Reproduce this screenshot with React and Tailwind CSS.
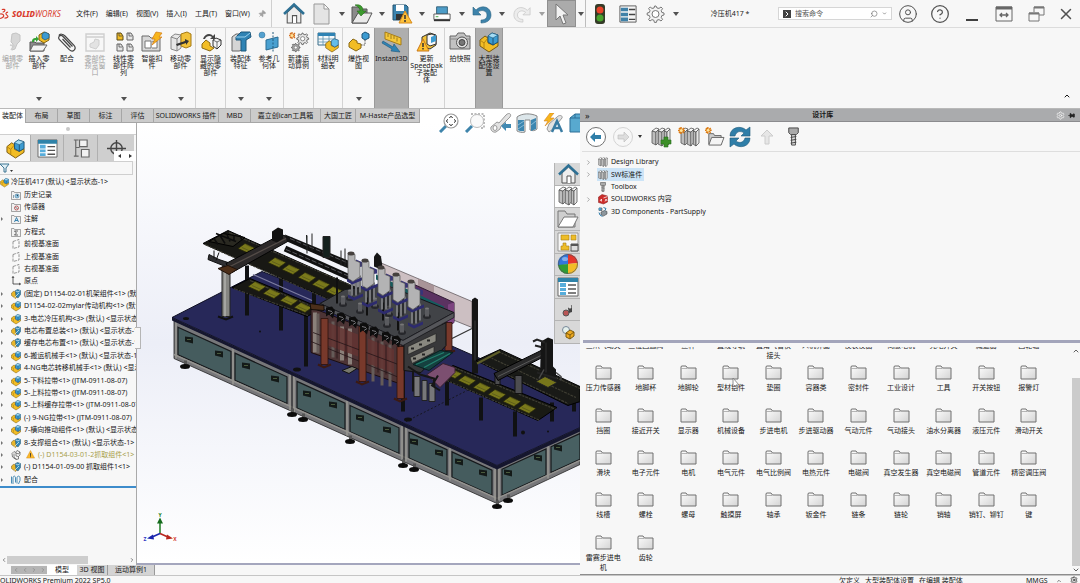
import { ChevronUp, ChevronDown, ChevronRight, ChevronLeft, CircleHelp, CircleUser, Search, Settings, X, Pin } from 'lucide-react'

const menus = ['文件(F)', '编辑(E)', '视图(V)', '插入(I)', '工具(T)', '窗口(W)']

const ribbon = [
  { label: '编辑零部件', lines: ['编辑零', '部件'], icon: 'clipGray', width: 'w-[25px]', disabled: true },
  { label: '插入零部件', lines: ['插入零', '部件'], icon: 'insert', width: 'w-[28px]', menu: true },
  { label: '配合', lines: ['配合'], icon: 'clip', width: 'w-[28px]' },
  { label: '零部件预览窗口', lines: ['零部件', '预览窗', '口'], icon: 'preview', width: 'w-[28px]', disabled: true },
  { label: '线性零部件阵列', lines: ['线性零', '部件阵', '列'], icon: 'pattern', width: 'w-[29px]', menu: true },
  { label: '智能扣件', lines: ['智能扣', '件'], icon: 'fastener', width: 'w-[28px]' },
  { label: '移动零部件', lines: ['移动零', '部件'], icon: 'move', width: 'w-[30px]', menu: true, divider: true },
  { label: '显示隐藏的零部件', lines: ['显示隐', '藏的零', '部件'], icon: 'showHide', width: 'w-[30px]', divider: true },
  { label: '装配体特征', lines: ['装配体', '特征'], icon: 'feature', width: 'w-[29px]', menu: true },
  { label: '参考几何体', lines: ['参考几', '何体'], icon: 'reference', width: 'w-[29px]', menu: true, divider: true },
  { label: '新建运动算例', lines: ['新建运', '动算例'], icon: 'gears', width: 'w-[30px]', divider: true },
  { label: '材料明细表', lines: ['材料明', '细表'], icon: 'bom', width: 'w-[29px]', divider: true },
  { label: '爆炸视图', lines: ['爆炸视', '图'], icon: 'explode', width: 'w-[31px]', menu: true },
  { label: 'Instant3D', lines: ['Instant3D'], icon: 'instant', width: 'w-[35px]', active: true },
  { label: '更新Speedpak子装配体', lines: ['更新', 'Speedpak', '子装配', '体'], icon: 'speedpak', width: 'w-[36px]', divider: true },
  { label: '拍快照', lines: ['拍快照'], icon: 'camera', width: 'w-[30px]' },
  { label: '大型装配体设置', lines: ['大型装', '配体设', '置'], icon: 'asm', width: 'w-[28px]', active: true },
]

const commandTabs = [
  { label: '装配体', width: 'w-[26px]', active: true },
  { label: '布局', width: 'w-[32px]' },
  { label: '草图', width: 'w-[32px]' },
  { label: '标注', width: 'w-[32px]' },
  { label: '评估', width: 'w-[32px]' },
  { label: 'SOLIDWORKS 插件', width: 'w-[65px]' },
  { label: 'MBD', width: 'w-[32px]' },
  { label: '嘉立创ican工具箱', width: 'w-[70px]' },
  { label: '大国工匠', width: 'w-[35px]' },
  { label: 'M-Haste产品选型', width: 'w-[64px]' },
]

const treeItems = [
  { label: '历史记录', icon: 'history' },
  { label: '传感器', icon: 'sensor' },
  { label: '注解', icon: 'note', open: true },
  { label: '方程式', icon: 'equation' },
  { label: '前视基准面', icon: 'plane' },
  { label: '上视基准面', icon: 'plane' },
  { label: '右视基准面', icon: 'plane' },
  { label: '原点', icon: 'origin' },
  { label: '(固定) D1154-02-01机架组件<1> (默认)', icon: 'part', open: true },
  { label: 'D1154-02-02mylar传动机构<1> (默认)', icon: 'asm', open: true },
  { label: '3-电芯冷压机构<3> (默认) <显示状态-1>', icon: 'asm', open: true },
  { label: '电芯布置总装<1> (默认) <显示状态-1>', icon: 'part', open: true },
  { label: '缓存电芯布置<1> (默认) <显示状态-1>', icon: 'part', open: true },
  { label: '6-搬运机械手<1> (默认) <显示状态-1>', icon: 'asm', open: true },
  { label: '4-NG电芯转移机械手<1> (默认) <显示状态-1>', icon: 'asm', open: true },
  { label: '5-下料拉带<1> (JTM-0911-08-07)', icon: 'asm', open: true },
  { label: '5-上料拉带<1> (JTM-0911-08-07)', icon: 'asm', open: true },
  { label: '5-上料缓存拉带<1> (JTM-0911-08-07)', icon: 'asm', open: true },
  { label: '(-) 9-NG拉带<1> (JTM-0911-08-07)', icon: 'asm', open: true },
  { label: '7-横向推动组件<1> (默认) <显示状态-1>', icon: 'asm', open: true },
  { label: '8-支撑组合<1> (默认) <显示状态-1>', icon: 'part', open: true },
  { label: '(-) D1154-03-01-2抓取组件<1>', icon: 'hidden', open: true, warning: true },
  { label: '(-) D1154-01-09-00 抓取组件1<1>', icon: 'part', open: true },
  { label: '配合', icon: 'mates', open: true },
]

const libraryItems = [
  { label: 'Design Library', icon: 'books', open: true },
  { label: 'SW标准件', icon: 'books', open: true, selected: true },
  { label: 'Toolbox', icon: 'screw' },
  { label: 'SOLIDWORKS 内容', icon: 'content', open: true },
  { label: '3D Components - PartSupply', icon: 'supply' },
]

const folders = [
  '三爪气动夹', '三位四通阀', '丝杆', '直线导轨', '直角气管快接头', '人机界面', '仪表仪器', '伺服电机', '光电开关', '减速器', '凸轮轴',
  '压力传感器', '地脚杯', '地脚轮', '型材铝件', '垫圈', '容器类', '密封件', '工业设计', '工具', '开关按钮', '报警灯',
  '挡圈', '接近开关', '显示器', '机械设备', '步进电机', '步进驱动器', '气动元件', '气动接头', '油水分离器', '液压元件', '滑动开关',
  '滑块', '电子元件', '电机', '电气元件', '电气比例阀', '电热元件', '电磁阀', '真空发生器', '真空电磁阀', '管道元件', '精密调压阀',
  '线槽', '螺栓', '螺母', '触摸屏', '轴承', '钣金件', '链条', '链轮', '销轴', '销钉、铆钉', '键',
  '雷赛步进电机', '齿轮',
]

const cog = 'M10 3l1 2 2 .4 2-1.4 1.6 1.6L15.200 7.600l.6 1.800 2.200.6v2l-2.200.6-.6 1.800 1.400 2L15 18l-2-1.400-2 .6-.6 2.200h-2L7.800 17.200 6 16.600 4 18l-1.400-1.400L4 14.400l-.6-1.800L1.200 12v-2l2.200-.6L4 7.600 2.600 5.600 4.200 4 6 5.400 8 5l.6-2z'

const volumes = (
  <g stroke="#555" strokeWidth=".8" strokeLinejoin="round">
    <path d="M1 4l4 1v13l-4-2zM7 4l4 1v14l-4-2zM13 4l3 1v14l-3-2z" fill="#bdbdbd" />
    <path d="M1 4l4-3 3 1-3 3zM7 4l4-3 3 1-3 3zM13 4l4-3 2 1-3 3z" fill="#f4f4f4" />
    <path d="M5 5l2-2v13l-2 2zM11 5l2-2v13l-2 3zM16 5l3-3v14l-3 3z" fill="#e6e6e6" />
  </g>
)

const art = {
  asm: (
    <>
      <path d="M1 8l5-4 3 2v5l5 2 5-3v4l-9 6-9-6z" fill="#f2bd25" stroke="#7a5a10" />
      <path d="M1 8l4 3v5M5 11l4-5" fill="none" stroke="#b58612" />
      <path d="M9 4l4-3 6 2v7l-5 3-5-3z" fill="#3c9bd1" stroke="#1c5578" />
      <path d="M9 4l5 2 5-3-6-2z" fill="#a4dcf5" stroke="#1c5578" strokeWidth=".6" />
      <path d="M14 6v7" stroke="#1c5578" />
    </>
  ),
  part: (
    <>
      <path d="M1 8l5-4 4 3v4l4 2-5 6-8-6z" fill="#e9b62a" stroke="#6f5a22" />
      <path d="M9 3l4-2 6 2v8l-5 7-4-3z" fill="#3287b5" stroke="#1d4d69" />
      <path d="M10 4l4 2 4-3M7 17l9-9" fill="none" stroke="#d9edf5" strokeWidth="1.500" />
    </>
  ),
  hidden: (
    <path d="M2 7l4-4 3 2 3-4 6 3v6l-3 3v5l-5 1-7-5zM6 7v8l5 3M10 5v7l5 1M10 6l5 2 3-4" fill="none" stroke="#444" strokeWidth="1.300" />
  ),
  clipGray: (
    <>
      <path d="M9 2l4-1 4 2v6l-3 3-2 5-3 1 1-6-2-2z" fill="#d7d7d7" stroke="#c4c4c4" />
      <path d="M7 13l4 1-3 4" fill="none" stroke="#cfcfcf" strokeWidth="1.500" />
    </>
  ),
  clip: (
    <path d="M15.500 14.500L6 4.500C3.500 2 0 5 2.500 7.700l10 10.200c3.500 3 7.500-1 4.500-4.500L8 4C6 2 3 1.500 1.800 3.500M13.500 15.500L5.500 7" fill="none" stroke="#444" strokeWidth="1.200" />
  ),
  insert: (
    <>
      <path d="M1 10h5l1 1h8v8H1z" fill="#8d8d8d" stroke="#555" />
      <path d="M4 13h14l-4 6H1z" fill="#f4f4f4" stroke="#666" />
      <path d="M3 10c0-3 1-4 4-4V4l3 3-3 3V8C5 8 5 9 5 10z" fill="#36a336" />
      <path d="M10 3l5-3 5 2v6l-5 3-5-3z" fill="#f2bd25" stroke="#826311" />
      <path d="M13 2l3-2 4 2v4l-4 2-3-2z" fill="#3c9bd1" stroke="#1c5578" strokeWidth=".7" />
    </>
  ),
  preview: (
    <g fill="none" stroke="#cfcfcf">
      <path d="M1 2h18v17H1zM1 5h18" strokeWidth="1.400" />
      <path d="M5 12l4-2 1-3 4 1v5l-3 4-6-2z" fill="#e3e3e3" />
    </g>
  ),
  pattern: (
    <>
      <path d="M3 1h4l2 3v4H3z" fill="#f2bd25" stroke="#5a4a1a" />
      <path d="M13 1h4l2 3v4h-6zM3 12h4l2 3v4H3zM13 12h4l2 3v4h-6z" fill="#e6e6e6" stroke="#666" />
      <path d="M5 1v3h3M15 1v3h3M5 12v3h3M15 12v3h3" fill="none" stroke="#444" strokeWidth=".7" />
    </>
  ),
  fastener: (
    <>
      <path d="M0 4h7l2 2h9v13H0z" fill="#d8d8d8" stroke="#6b6b6b" />
      <path d="M3 9h6v7H3zM10 10l5-1v7h-5" fill="#fff" stroke="#777" />
      <path d="M14 0l6 1-3 4h3L10 13l3-6h-3z" fill="#f7b51c" stroke="#d37a12" strokeWidth=".7" />
    </>
  ),
  move: (
    <>
      <path d="M0 5l4-3 6 1v13l-4 3-6-2z" fill="#e6e6e6" stroke="#888" />
      <path d="M0 5l6 2 4-4M6 7v12" fill="none" stroke="#888" />
      <path d="M10 2l6-2 4 2v12l-5 2-5-2z" fill="#f2c23a" stroke="#a67b14" />
      <path d="M5 12l9-3V7l4 2-3 4v-2l-9 3z" fill="#333" />
    </>
  ),
  showHide: (
    <>
      <path d="M2 7c2-6 8-6 10-3l2-2v5H9l2-2C9 3 5 4 4 7z" fill="#444" />
      <path d="M1 12l4-4 4 3v3l4 2-4 3-8-3z" fill="#f2bd25" stroke="#8a6915" />
      <path d="M12 8l3-2 5 2v5l-4 4-4-3z" fill="#f4f4f4" stroke="#333" />
      <path d="M12 8l4 2 4-2M16 10v6" fill="none" stroke="#333" strokeWidth=".7" />
    </>
  ),
  feature: (
    <>
      <path d="M1 5l4-3h7v16l-4 1H1z" fill="#d5d5d5" stroke="#666" />
      <path d="M5 5l5-5h9l1 5-5 3v11h-5V8H5z" fill="#2f83b4" stroke="#1d587c" />
      <path d="M5 5h9l5-4" fill="none" stroke="#9ad1ee" />
    </>
  ),
  reference: (
    <>
      <circle cx="3" cy="3" r="3" fill="#54a1cf" stroke="#2d6f97" strokeWidth=".5" />
      <path d="M7 8l12-3v10L7 18z" fill="#4aa0d0" stroke="#2a6c93" />
      <path d="M14 0v20" stroke="#225a7c" strokeDasharray="2 1.500" />
    </>
  ),
  gears: (
    <>
      <g transform="translate(7 -1) scale(.7)"><path d={cog} fill="#e4e4e4" stroke="#666" strokeWidth="1.300" /><circle cx="9.500" cy="11" r="3" fill="#fff" stroke="#666" /></g>
      <g transform="translate(2 10) scale(.5)"><path d={cog} fill="#aaa" stroke="#555" strokeWidth="1.500" /><circle cx="9.500" cy="11" r="3" fill="#fff" stroke="#555" /></g>
      <path d="M3 0v7M0 3.500h6M1 1l5 5M6 1L1 6" stroke="#d6701d" strokeWidth="1.300" />
      <circle cx="3" cy="3.500" r="1.500" fill="#ffe59b" />
    </>
  ),
  bom: (
    <>
      <path d="M0 1h17v12H0z" fill="#f5f9fb" stroke="#3b6d88" />
      <path d="M0 1h17v3H0z" fill="#2f83b4" />
      <path d="M0 7h17M0 10h17M5 4v9M11 4v9" stroke="#5d93ad" strokeWidth=".8" />
      <g transform="translate(7 6) scale(.7)"><path d="M1 8l5-4 3 2v5l5 2 5-3v4l-9 6-9-6z" fill="#f2bd25" stroke="#7a5a10" /><path d="M9 4l4-3 6 2v7l-5 3-5-3z" fill="#65bce8" stroke="#1c5578" /></g>
    </>
  ),
  explode: (
    <>
      <path d="M13 2l3-2 4 2v4l-4 2-3-2z" fill="#3c9bd1" stroke="#1c5578" />
      <path d="M16 8v5h-5" fill="none" stroke="#555" strokeDasharray="1.500 1" />
      <path d="M0 11l4-4 4 2v2l4 1v4l-5 3-7-4z" fill="#f2bd25" stroke="#8a6915" />
    </>
  ),
  instant: (
    <>
      <path d="M3 0l16 6v7L3 7z" fill="#f6c83a" stroke="#a57c18" />
      <path d="M6 2v3M9 3v4M12 4v3M15 5.500v4" stroke="#8a6915" strokeWidth=".8" />
      <path d="M1 9l10 6 1-3 6 8-9-1 1-2L0 11z" fill="#2f83b4" stroke="#1d587c" strokeWidth=".6" />
    </>
  ),
  speedpak: (
    <>
      <path d="M5 5l8-4 6 2v10l-6 4-8-3z" fill="#f2c43b" stroke="#333" />
      <path d="M10 3l5-1 4 2v8l-6 2-3-2z" fill="#f7f7f7" stroke="#333" />
      <path d="M14 5l5-2v6l-5 2z" fill="#3c9bd1" />
      <path d="M6 7l6 12H0z" fill="#ffc12d" stroke="#c9781a" />
      <path d="M6 11v4M6 16v1.500" stroke="#333" strokeWidth="1.500" />
    </>
  ),
  camera: (
    <>
      <path d="M0 4h6l2-3h6l2 3h4v13H0z" fill="#c2c2c2" stroke="#666" />
      <path d="M0 7h20" stroke="#888" />
      <circle cx="12" cy="10.500" r="5.500" fill="#e2e2e2" stroke="#555" />
      <circle cx="12" cy="10.500" r="3" fill="#777" stroke="#444" />
    </>
  ),
  home: (
    <>
      <path d="M4 9v10h13V9l-6.500-6z" fill="#eee" stroke="#555" />
      <path d="M9 19v-7h4v7" fill="#fff" stroke="#555" />
      <path d="M1 10.500L10.500 1.500 20 10.500" fill="none" stroke="#2e7094" strokeWidth="2.500" />
    </>
  ),
  doc: <path d="M2 0h10l5 5v15H2zM12 0v5h5" fill="#e4e4e4" stroke="#999" />,
  open: (
    <>
      <path d="M0 3h7l1 2h7v14H0z" fill="#8b8b8b" stroke="#555" />
      <path d="M6 9h14l-5 10H0z" fill="#eaeaea" stroke="#555" />
      <path d="M3 1c6-1 8 2 8 6h3l-5 5-4-5h3c0-2-1-4-5-6z" fill="#3c9a2d" stroke="#276b1c" strokeWidth=".6" />
    </>
  ),
  save: (
    <>
      <path d="M1 1h13l2 2v13H1z" fill="#3b83ae" stroke="#24536f" />
      <path d="M4 1h8v6H4z" fill="#fff" />
      <path d="M4 10h8v6H4z" fill="#333" />
      <path d="M13 7l7 12H7z" fill="#fdc13a" stroke="#d78b1d" />
      <path d="M13 11v4M13 16v2" stroke="#333" strokeWidth="1.500" />
    </>
  ),
  print: (
    <>
      <path d="M4 2h12v8H4z" fill="#4d9cc7" stroke="#2d5c76" />
      <path d="M1 10h18v6H1z" fill="#fff" stroke="#555" />
      <path d="M1 16h18v2H1z" fill="#333" />
      <path d="M3 13h3" stroke="#36a336" />
    </>
  ),
  undo: <path d="M1 3v8h8L6 8c4-3 9-1 9 3s-3 5-6 5v3c6 0 10-3 10-8C19 3 10 0 4 6z" fill="#3d83ab" stroke="#2d6483" strokeWidth=".6" />,
  redo: <path d="M19 3v8h-8l3-3c-4-3-9-1-9 3s3 5 6 5v3c-6 0-10-3-10-8C1 3 10 0 16 6z" fill="#ececec" stroke="#c6c6c6" strokeWidth=".8" />,
  cursor: <path d="M4 0v16l4-4 3 8 3-1-3-8h5z" fill="#f2f2f2" stroke="#777" />,
  traffic: (
    <>
      <rect x="5" y="0" width="10" height="20" rx="3" fill="#343b28" />
      <circle cx="10" cy="6" r="3.500" fill="#e8432a" />
      <circle cx="10" cy="14" r="3.500" fill="#49a32e" />
    </>
  ),
  list: (
    <>
      <path d="M1 1h18v18H1z" fill="#f4f4f4" stroke="#555" />
      <path d="M2 3h8v4H2zM2 8.500h8v4H2zM2 14h8v4H2z" fill="#3f81a8" />
      <path d="M11 5h7M11 10.500h7M11 16h7" stroke="#444" strokeWidth="1.500" />
    </>
  ),
  listBlue: (
    <>
      <path d="M0 1h20v18H0z" fill="#fff" stroke="#666" />
      <path d="M0 1h20v4H0z" fill="#2f83a9" />
      <path d="M2 6h6v4H2zM2 11h6v3H2zM2 15h6v3H2z" fill="#57addb" />
      <path d="M10 8h8M10 12h8M10 16h8" stroke="#555" strokeWidth="1.500" />
    </>
  ),
  config: (
    <path d="M3 1h5M5 1v17M3 18h5M5 9h4M9 1h8v7H9zM11 11h8v8h-8z" fill="#f2f2f2" stroke="#666" strokeWidth="1.200" />
  ),
  target: (
    <>
      <circle cx="10" cy="10" r="6" fill="none" stroke="#444" strokeWidth="1.500" />
      <path d="M0 10h20M10 1v18" stroke="#444" strokeWidth="1.500" />
    </>
  ),
  history: (
    <>
      <path d="M1 3h5l1 2h12v14H1z" fill="#f1f1f1" stroke="#555" />
      <circle cx="12" cy="12" r="4" fill="#9ccbe5" stroke="#2a6f98" />
      <path d="M12 9v3h2M5 10v6" stroke="#244f67" />
    </>
  ),
  sensor: (
    <>
      <path d="M1 3h5l1 2h12v14H1z" fill="#f1f1f1" stroke="#555" />
      <circle cx="11" cy="12" r="4" fill="none" stroke="#a33" strokeWidth="1.500" />
      <path d="M9 10l4 4" stroke="#444" strokeWidth="1.500" />
    </>
  ),
  note: (
    <>
      <path d="M1 3h5l1 2h12v14H1z" fill="#f1f1f1" stroke="#555" />
      <path d="M7 16l4-9 4 9M8 13h6" fill="none" stroke="#2878a8" strokeWidth="1.800" />
    </>
  ),
  equation: (
    <>
      <path d="M1 3h5l1 2h12v14H1z" fill="#f1f1f1" stroke="#555" />
      <path d="M14 8H7l4 4-4 4h7" fill="none" stroke="#333" strokeWidth="1.500" />
    </>
  ),
  plane: <path d="M4 5l12-4v15L4 19z" fill="#fafafa" stroke="#555" strokeWidth="1.200" strokeDasharray="6 2" />,
  origin: <path d="M4 1v15h15M2 4l2-3 2 3M16 14l3 2-3 2" fill="none" stroke="#333" strokeWidth="1.600" />,
  mates: <path d="M4 18V6c0-5 5-5 5 0v9M12 17V6c0-5 6-5 6 0v5l-3 7M1 3v14" fill="none" stroke="#4a8db5" strokeWidth="2" />,
  warning: (
    <>
      <path d="M10 1l9 17H1z" fill="#fdb92a" stroke="#d08a1b" />
      <path d="M10 7v6M10 14v2" stroke="#333" strokeWidth="2" />
    </>
  ),
  books: volumes,
  booksAdd: (
    <>
      {volumes}
      <path d="M13 10h4v3h3v4h-3v3h-4v-3h-3v-4h3z" fill="#3c8f28" stroke="#276b1c" strokeWidth=".6" />
    </>
  ),
  booksNew: (
    <>
      <g transform="translate(2 0)">{volumes}</g>
      <path d="M3 0v7M0 3.500h7M1 1l5 5M6 1L1 6" stroke="#dc7a12" strokeWidth="1.500" />
      <circle cx="3.300" cy="3.500" r="1.500" fill="#ffe59b" />
    </>
  ),
  folderNew: (
    <>
      <path d="M4 7h5l1 2h7v9H4z" fill="#ccc" stroke="#666" />
      <path d="M7 11h13l-3 8H4z" fill="#f4f4f4" stroke="#666" />
      <path d="M3 0v7M0 3.500h7M1 1l5 5M6 1L1 6" stroke="#dc7a12" strokeWidth="1.500" />
      <circle cx="3.300" cy="3.500" r="1.500" fill="#ffe59b" />
    </>
  ),
  refresh: (
    <>
      <path d="M0 9C0 0 11-2 16 3l4-3v9h-9l3-3C10 3 6 5 5 9z" fill="#2f7ea8" stroke="#205b7b" strokeWidth=".6" />
      <path d="M20 11c0 9-11 11-16 6l-4 3v-9h9l-3 3c4 3 8 1 9-3z" fill="#2f7ea8" stroke="#205b7b" strokeWidth=".6" />
    </>
  ),
  up: <path d="M10 3l6 6h-4v8H8V9H4z" fill="#e6e6e6" stroke="#ccc" />,
  screw: (
    <>
      <path d="M5 1h10v5l-2 2H7L5 6z" fill="#aaa" stroke="#444" />
      <path d="M8 8h4v11H8zM7 11l6-1M7 14l6-1M7 17l6-1" fill="#ddd" stroke="#444" />
    </>
  ),
  content: (
    <>
      <path d="M1 6l7-5 11 3v12l-8 4-10-3z" fill="#cc2d2b" stroke="#801b1b" />
      <path d="M11 8l8-3M4 14l3-4v5M14 15l2-5 2 4" fill="none" stroke="#fff" strokeWidth="1.500" />
    </>
  ),
  supply: (
    <>
      <path d="M2 2h6v5H2zM6 10l7-3 5 2v5l-7 4-5-3z" fill="#8d979d" stroke="#333" />
      <path d="M11 1l5 2-2 4M2 11l2 5 5 3" fill="none" stroke="#2878a8" strokeWidth="2" />
      <circle cx="4" cy="4" r="3" fill="#4c9bc9" />
    </>
  ),
  folderOpen: (
    <>
      <path d="M0 2h7l2 3h8v13H0z" fill="#cfcfcf" stroke="#777" />
      <path d="M6 8h14l-5 10H0z" fill="#fff" stroke="#777" />
    </>
  ),
  palette: (
    <>
      <path d="M0 1h20v18H0z" fill="#f6f6f6" stroke="#999" />
      <path d="M3 3h8v5H3zM13 3h5v5h-5zM5 11h3v3h3v4H3v-4h2z" fill="#eebd27" stroke="#a47d15" strokeWidth=".6" />
      <path d="M13 12h7v7h-7z" fill="#ddd" stroke="#555" /><path d="M13 12h7v2h-7z" fill="#555" />
    </>
  ),
  ball: (
    <>
      <path d="M10 10V0a10 10 0 0 1 10 9z" fill="#e5352c" />
      <path d="M10 10L10 0A10 10 0 0 0 0 12z" fill="#3177dd" />
      <path d="M10 10L0 11a10 10 0 0 0 10 9z" fill="#2f9c34" />
      <path d="M10 10l10-1a10 10 0 0 1-10 11z" fill="#f3bc26" />
      <circle cx="10" cy="10" r="9.500" fill="none" stroke="#555" strokeWidth=".7" />
      <ellipse cx="7" cy="5" rx="3" ry="2" fill="#fff" opacity=".4" />
    </>
  ),
  robot: (
    <>
      <circle cx="8" cy="13" r="3" fill="#b85454" stroke="#555" />
      <path d="M10 8l4-3v7l-3 1z" fill="#444" /><circle cx="12" cy="7" r="1.500" fill="#ddd" />
    </>
  ),
  cubes: (
    <>
      <circle cx="8" cy="8" r="3.500" fill="#e4f0ec" stroke="#789" />
      <path d="M8 11l4-3 4 2v4l-4 3-4-2z" fill="#eea91f" stroke="#7a5a10" /><path d="M8 11l4 2 4-3M12 13v4" fill="none" stroke="#7a5a10" />
    </>
  ),
  zoomFit: (
    <>
      <path d="M1 19l6-6" stroke="#3e84ab" strokeWidth="3" />
      <circle cx="12" cy="8" r="7" fill="#fff" stroke="#999" strokeWidth="1.200" />
      <path d="M12 3v2M12 11v2M7 8h2M15 8h2M10 5l2-2 2 2M10 11l2 2 2-2M9 6L7 8l2 2M15 6l2 2-2 2" fill="none" stroke="#666" />
    </>
  ),
  zoomArea: (
    <>
      <path d="M6 1h13v14h-4" fill="none" stroke="#777" strokeDasharray="2 1.500" />
      <path d="M1 19l6-6" stroke="#3e84ab" strokeWidth="3" />
      <circle cx="12" cy="8" r="6.500" fill="#fafafa" stroke="#bbb" />
    </>
  ),
  section: (
    <>
      <path d="M0 4c5-4 14-4 20-1v13c-2 2-5 2-7 1V7H8v12c-3 1-6 0-8-1z" fill="#dce6ea" stroke="#888" />
      <path d="M1 7h6v11c-3 0-5 0-6-1zM14 7l5-2v11l-5 2z" fill="#3c86b0" />
      <path d="M1 12l6-4M1 16l6-4M14 12l5-4" stroke="#a7d3ea" strokeWidth=".7" />
    </>
  ),
  prevView: (
    <>
      <path d="M0 14l6-5 2 1 7-8c3-3 6-1 4 2l-9 9-1 3-4 3c-3 1-6-2-5-5z" fill="#e2e2e2" stroke="#999" />
      <ellipse cx="4" cy="15" rx="2" ry="2.500" fill="#fff" stroke="#999" />
      <path d="M10 13l5-4v2h5v4h-5v3z" fill="#4189b2" />
    </>
  ),
  sketchView: (
    <>
      <path d="M4 16l2-5 8-7c3-3 6-1 5 1l-9 11-4 3z" fill="#e2e2e2" stroke="#999" />
      <path d="M7 0L1 8h4L2 13l9-8H7l4-5z" fill="#f7b51c" stroke="#d78521" strokeWidth=".6" />
      <path d="M9 19l5-11 5 11M11 15h6" fill="none" stroke="#3a7ca3" strokeWidth="2.500" />
    </>
  ),
  cubeView: <path d="M1 5l5-4h13v18H1zM1 5h14v14M6 1v4" fill="#58a9cf" stroke="#2d6f97" />,
}

function Icon({ name, className = 'size-5' }) {
  return (
    <svg viewBox="0 0 20 20" className={`shrink-0 overflow-visible ${className}`} aria-hidden="true">
      {art[name]}
    </svg>
  )
}

function Caret({ light }) {
  return (
    <svg viewBox="0 0 6 4" className={`w-[6px] h-[4px] shrink-0 ${light ? 'fill-neutral-400' : 'fill-neutral-600'}`} aria-hidden="true">
      <path d="M0 0h6L3 4z" />
    </svg>
  )
}

function ToolButton({ label, icon, menu, light, iconClass = 'size-5' }) {
  return (
    <>
      <button aria-label={label} className="w-[30px] h-full flex items-center justify-center">
        <Icon name={icon} className={iconClass} />
      </button>
      {menu && (
        <button aria-label={`${label}选项`} className="w-[10px] h-full flex items-center justify-center">
          <Caret light={light} />
        </button>
      )}
    </>
  )
}

function TitleBar() {
  return (
    <header className="h-7 shrink-0 flex items-center border-b border-[#dcdcdc]">
      <div className="flex items-center gap-[3px] w-[72px] text-[#d93a2c] text-[8px] italic">
        <svg viewBox="0 0 10 12" className="w-[9px] h-3" aria-hidden="true">
          <path d="M2 1c5-1 4 2 1 3M0 11c6-1 5-6 0-5M9 4C6 4 6 6 8 7.500s0 3-3 3" fill="none" stroke="#d93a2c" strokeWidth="1.300" />
        </svg>
        <span><b className="font-extrabold">SOLID</b>WORKS</span>
      </div>
      <nav className="flex items-center gap-2 w-[199px] pl-1">
        {menus.map((menu) => (
          <button key={menu} className="whitespace-nowrap">{menu}</button>
        ))}
        <Pin className="size-2 rotate-45 text-neutral-400 fill-neutral-400" />
      </nav>
      <div className="h-full flex items-center border-l border-[#cfcfcf]">
        <button aria-label="主页" className="w-[35px] flex justify-center pl-[8px]">
          <Icon name="home" className="size-[21px]" />
        </button>
        <ToolButton label="新建" icon="doc" menu />
        <ToolButton label="打开" icon="open" menu />
        <ToolButton label="保存" icon="save" menu />
        <ToolButton label="打印" icon="print" menu iconClass="size-[18px]" />
        <ToolButton label="撤销" icon="undo" menu />
        <ToolButton label="重做" icon="redo" menu light iconClass="size-[18px]" />
        <button aria-label="选择" className="w-[29px] h-full bg-[#ababab] border border-[#8f8f8f] flex items-center justify-center">
          <Icon name="cursor" />
        </button>
        <button aria-label="选择选项" className="w-[10px] h-full border-r border-[#bdbdbd] flex items-center justify-center">
          <Caret />
        </button>
        <button aria-label="重建模型" className="w-7 flex justify-center"><Icon name="traffic" /></button>
        <button aria-label="文件属性" className="w-7 flex justify-center"><Icon name="list" className="size-[18px]" /></button>
        <button aria-label="选项" className="w-7 flex justify-center">
          <svg viewBox="0 1 20 20" className="size-5"><path d={cog} fill="#f2f2f2" stroke="#777" /><circle cx="9.500" cy="11" r="3.500" fill="#fff" stroke="#777" /></svg>
        </button>
        <button aria-label="选项菜单" className="w-3 flex justify-center"><Caret /></button>
      </div>
      <h1 className="flex-1 text-center whitespace-nowrap">冷压机417 *</h1>
      <label className="w-[114px] h-[13px] flex items-center gap-1 px-1 bg-white border border-[#d6d6d6]">
        <span className="size-2 shrink-0 bg-neutral-700 text-white flex items-center justify-center">
          <ChevronRight className="size-2" strokeWidth={3} />
        </span>
        <input aria-label="搜索命令" placeholder="搜索命令" className="min-w-0 flex-1 bg-transparent outline-none placeholder:text-neutral-600" />
        <Search className="size-2 shrink-0 text-neutral-500 -scale-x-100 rotate-0" />
        <ChevronDown className="size-[5px] shrink-0" />
      </label>
      <div className="flex items-center text-neutral-600">
        <button aria-label="登录" className="w-8 flex justify-center"><CircleUser className="size-5" strokeWidth={1.2} /></button>
        <button aria-label="帮助" className="w-8 flex justify-center"><CircleHelp className="size-5" strokeWidth={1.5} /></button>
        <button aria-label="最小化" className="w-8 h-[14px] flex justify-center items-end"><span className="w-3 h-[2px] bg-neutral-700" /></button>
        <button aria-label="跨越显示" className="w-8 flex justify-center">
          <svg viewBox="0 0 18 16" className="w-[18px] h-4" fill="none" stroke="#666"><path d="M1 1h16v14H1z" /><path d="M1 2h16" strokeWidth="3" /><path d="M5 9h8M7 7L5 9l2 2M11 7l2 2-2 2" strokeWidth="1.300" /></svg>
        </button>
        <button aria-label="还原" className="w-8 flex justify-center">
          <svg viewBox="0 0 17 16" className="w-[17px] h-4" fill="none" stroke="#777"><path d="M6 6V1h10v8h-5M1 7h10v8H1z" /><path d="M6 1.500h10M1 7.500h10" strokeWidth="2" /></svg>
        </button>
        <button aria-label="关闭" className="w-[28px] flex justify-center"><X className="size-[18px]" /></button>
      </div>
    </header>
  )
}

function Ribbon() {
  return (
    <div className="h-20 shrink-0 flex">
      {ribbon.map(({ label, lines, icon, width, menu, active, disabled, divider }) => (
        <button
          key={label}
          disabled={disabled}
          className={`relative ${width} shrink-0 flex flex-col items-center pt-1 leading-[7px] ${
            active ? 'bg-[#aeaeae] border-x border-[#9a9a9a]' : ''
          } ${divider ? 'border-r border-[#d3d3d3]' : ''} ${disabled ? 'text-neutral-400' : ''}`}
        >
          <Icon name={icon} className="size-5 mb-[3px]" />
          {lines.map((line) => (
            <span key={line} className="whitespace-nowrap">{line}</span>
          ))}
          {menu && <span className="absolute bottom-[7px]"><Caret /></span>}
        </button>
      ))}
      <button aria-label="折叠工具栏" className="ml-auto mr-[9px] mb-2 self-end"><ChevronUp className="size-2" strokeWidth={3} /></button>
    </div>
  )
}

function CommandTabs() {
  return (
    <div className="h-[14px] shrink-0 flex">
      {commandTabs.map(({ label, width, active }) => (
        <button
          key={label}
          className={`${width} shrink-0 flex items-center justify-center whitespace-nowrap border-r border-[#a6a6a6] ${
            active ? 'bg-white' : 'bg-[#cbcbcb] border-b'
          }`}
        >
          {label}
        </button>
      ))}
    </div>
  )
}

function FeatureTree() {
  return (
    <aside className="relative w-[137px] shrink-0 flex flex-col bg-[#f7f7f7] border-r border-[#a9a9a9]">
      <div className="h-[12px] shrink-0 flex items-center justify-center bg-white border-b border-[#cfcfcf]">
        <span className="size-1 rounded-full bg-[#c8c8c8]" />
      </div>
      <div className="relative h-[26px] shrink-0 flex">
        <button aria-label="设计树" className="w-[30px] flex items-center justify-center"><Icon name="asm" className="size-[19px]" /></button>
        <button aria-label="属性" className="w-[34px] flex items-center justify-center bg-[#cfcfcf] border-x border-[#b0b0b0]"><Icon name="listBlue" className="size-[19px]" /></button>
        <button aria-label="配置" className="w-[34px] flex items-center justify-center bg-[#cfcfcf] border-r border-[#b0b0b0]"><Icon name="config" className="size-[19px]" /></button>
        <button aria-label="尺寸专家" className="w-[36px] flex items-center justify-center bg-[#cfcfcf]"><Icon name="target" className="size-[19px]" /></button>
        <div className="absolute right-0 bottom-0 flex bg-white">
          <button aria-label="向左" className="w-[11px] h-[10px] flex items-center justify-center"><svg viewBox="0 0 3 4" className="w-[3px] h-1"><path d="M3 0v4L0 2z" fill="#333" /></svg></button>
          <button aria-label="向右" className="w-[11px] h-[10px] flex items-center justify-center"><svg viewBox="0 0 3 4" className="w-[3px] h-1"><path d="M0 0v4l3-2z" fill="#333" /></svg></button>
        </div>
      </div>
      <label className="h-[14px] shrink-0 mr-[3px] flex items-center border border-[#cfcfcf] border-l-0">
        <svg viewBox="0 0 14 10" className="w-[14px] h-[10px] shrink-0" aria-hidden="true">
          <path d="M0 1h9L6 5v4H4V5z" fill="#dfeef5" stroke="#3e7693" /><path d="M10 7h3l-1.500 2z" fill="#333" />
        </svg>
        <input aria-label="过滤" className="min-w-0 flex-1 bg-transparent outline-none" />
      </label>
      <ul className="h-[310px] mt-[1px] shrink-0 grid auto-rows-fr overflow-hidden">
        <li className="flex items-center gap-[2px] whitespace-nowrap">
          <Icon name="asm" className="size-[9px]" />冷压机417 (默认) &lt;显示状态-1&gt;
        </li>
        {treeItems.map(({ label, icon, open, warning }) => (
          <li key={label} className={`flex items-center whitespace-nowrap ${warning ? 'text-[#a8a04c]' : ''}`}>
            <span className="w-[11px] shrink-0 pl-[1px]">
              {open && <svg viewBox="0 0 2 4" className="w-[2px] h-1 fill-neutral-500"><path d="M0 0l2 2-2 2z" /></svg>}
            </span>
            <Icon name={icon} className="size-[10px] mr-[3px]" />
            {warning && <Icon name="warning" className="size-[9px] ml-[2px] mr-[3px]" />}
            {label}
          </li>
        ))}
      </ul>
      <div className="h-[2px] shrink-0 bg-[#3d8ccb]" />
      <button aria-label="折叠面板" className="absolute -right-[5px] top-[204px] z-10 w-[6px] h-[22px] bg-[#f7f7f7] border border-l-0 border-[#b5b5b5]" />
      <div className="mt-auto h-[10px] flex items-center justify-between px-[1px]">
        <ChevronLeft className="size-[6px]" />
        <div className="flex-1 h-2 pr-[41px]"><div className="h-full bg-[#cdcdcd]" /></div>
        <ChevronRight className="size-[6px]" />
      </div>
    </aside>
  )
}

const front = (x) => 317 + (x - 172) * 0.455
const base = (x) => 358 + (x - 175) * 0.447
const sideTop = (x) => 465 - (x - 497) * 0.458
const sideBase = (x) => 502 - (x - 497) * 0.46

const frontPanels = [[178, 231], [235, 287], [297, 345], [350, 399], [409, 447], [452, 492]]
const sidePanels = [[502, 546], [551, 580]]
const handles = [
  [189, 339], [219, 353], [246, 365], [275, 378], [307, 393], [333, 404], [360, 417], [387, 429],
  [414, 441], [439, 452], [459, 461], [483, 472], [508, 472], [538, 457], [558, 447],
]
const feet = [[185, 366], [292, 414], [303, 419], [350, 441], [403, 465], [414, 469], [497, 506], [508, 500]]
const trays = [
  [247, 247], [277, 261], [291, 268], [307, 276], [321, 283], [335, 290],
  [257, 285], [272, 292], [289, 299], [303, 306],
  [453, 372], [467, 379], [482, 386], [497, 393], [512, 400], [527, 407],
]
const legs = [
  [245, 265, 50], [279, 272, 58], [312, 287, 22], [304, 312, 54], [401, 345, 66], [445, 380, 25],
  [479, 397, 23], [513, 411, 25], [550, 402, 19], [572, 398, 13],
]
const cylinders = [[353, 253], [367, 260], [383, 267], [398, 274], [413, 281]]
const pillars = [[321, 318, 46], [359, 326, 55], [397, 346, 52], [445, 322, 28]]
const probes = [[343, 296], [360, 303], [387, 317], [402, 324], [427, 308], [350, 290], [375, 298], [389, 306]]
const clamps = [[330, 312], [341, 318], [353, 322], [364, 328], [374, 332], [386, 337], [396, 341]]

function Machine() {
  return (
    <svg viewBox="137 122 443 441" preserveAspectRatio="xMidYMid slice" className="absolute inset-0 size-full" aria-label="冷压机417">
      {/* cabinet */}
      <path d="M174 320L497 466 580 428V464L497 503 174 358z" fill="#77777a" stroke="#222" strokeWidth=".8" />
      {frontPanels.map(([a, b]) => (
        <path key={a} d={`M${a} ${front(a) + 7}L${b} ${front(b) + 7}V${base(b) - 5}L${a} ${base(a) - 5}z`} fill="#455c5e" stroke="#17191c" strokeWidth="1.200" />
      ))}
      {sidePanels.map(([a, b]) => (
        <path key={a} d={`M${a} ${sideTop(a) + 6}L${b} ${sideTop(b) + 6}V${sideBase(b) - 5}L${a} ${sideBase(a) - 5}z`} fill="#486062" stroke="#17191c" strokeWidth="1.200" />
      ))}
      <path d="M174 354L497 498 580 460" fill="none" stroke="#94938f" strokeWidth="1.500" />
      <path d="M176 322v36M233 347v37M290 372v38M294 374v38M347 398v37M402 424v35M406 426v35M450 446v34M495 466v34M499 466v34M548 444v34" stroke="#999892" strokeWidth="1.500" />
      <path d="M292 373v40M404 425v37M497 467v36" stroke="#1c1c1c" />
      {handles.map(([x, y]) => (
        <g key={x}><path d={`M${x - 4} ${y - 3}l8 1v6l-8-2z`} fill="#141a18" /><path d={`M${x - 2} ${y}h4`} stroke="#4a5a3c" /></g>
      ))}
      {feet.map(([x, y]) => (
        <g key={x}><path d={`M${x - 1} ${y - 6}h3v5h-3z`} fill="#555" /><ellipse cx={x} cy={y} rx="5" ry="2.500" fill="#0b0b0b" /></g>
      ))}
      <path d="M172 317L262 271 428 335 580 402V427L497 465z" fill="#272859" stroke="#0e0f22" />
      <path d="M172 317v3L497 469 580 431v-4L497 465z" fill="#15162e" />
      <path d="M406 421L475 386" stroke="#111" strokeDasharray="2 2" strokeWidth=".8" />
      <g fill="#111"><ellipse cx="186" cy="318" rx="3" ry="1.500" /><ellipse cx="297" cy="369" rx="4" ry="2" /><ellipse cx="408" cy="419" rx="4" ry="2" /><circle cx="260" cy="331" r="1" /><circle cx="523" cy="432" r="2" /><circle cx="548" cy="431" r="1" /></g>

      {/* rear guard panel */}
      <path d="M380 262L472 301V327L380 290z" fill="#c9babd" opacity=".9" stroke="#443b3e" strokeWidth=".7" />
      <path d="M418 278l16 7v12l-16-7z" fill="#a08a8d" opacity=".8" />
      <path d="M412 283L454 302V322L447 326 412 308z" fill="#5b3261" stroke="#301a34" />
      <path d="M448 304l6-2v20l-6 3z" fill="#7d4480" />
      <path d="M376 274l68 32v5l-68-32z" fill="#155c5f" />
      <path d="M472 299l3-2 3 2v74h-6z" fill="#151515" />
      <path d="M452 338l20-10M475 320v40" stroke="#333" strokeWidth="1.200" />

      {legs.map(([x, y, h]) => (
        <path key={x} d={`M${x} ${y}h4v${h}h-4z`} fill="#101113" />
      ))}

      {/* infeed conveyors */}
      <path d="M203 243L228 230 356 287 334 301z" fill="#181814" stroke="#000" />
      <path d="M232 287L250 278 322 308 307 316z" fill="#181814" stroke="#000" />
      <path d="M205 244L333 301M229 232L356 287M234 288L308 315M250 280L320 309" stroke="#3d3c32" strokeWidth="1.200" strokeDasharray="4 1 2 1" />
      <path d="M209 241l14-8 22 4-12 9z" fill="#2a2921" stroke="#000" />
      <path d="M214 238l4 6M220 235l5 8M227 234l3 7M234 235v5M240 235l2 5M216 233l20 8" stroke="#0c0c0c" strokeWidth="1.500" />
      <path d="M209 254l10 5 9 3v5l-20-8zM214 250v8M219 252l-3 8" fill="#303033" stroke="#111" />

      {/* outfeed conveyors */}
      <path d="M476 360L500 349 580 386V401L568 405z" fill="#191a17" stroke="#000" />
      <path d="M438 376L453 365 557 407 538 420z" fill="#191a14" stroke="#000" />
      <path d="M440 377L540 420M454 367L556 409M479 361L568 403M488 356L576 397M498 351L580 388" stroke="#3f3e33" strokeWidth="1.200" strokeDasharray="3 1 2 1" />
      <path d="M477 363l23-12" stroke="#5d5d28" strokeWidth="2" />
      {trays.map(([x, y]) => (
        <g key={`${x}-${y}`}>
          <path d={`M${x - 9} ${y + 1}l7-5 11 5-7 5z`} fill="#7a791b" stroke="#26260a" strokeWidth=".8" />
          <path d={`M${x - 5} ${y}l9 4M${x - 1} ${y - 3}l6 3`} stroke="#55541a" strokeWidth=".7" />
        </g>
      ))}
      <path d="M536 381l9-5 12 6-9 5z" fill="#77761b" stroke="#222" />

      {/* transfer gantry, infeed side */}
      <path d="M222 266h8v50h-8z" fill="#868682" stroke="#222" /><path d="M225 268v48" stroke="#c4c4c0" />
      <path d="M218 316l8 3 7-3" stroke="#111" strokeWidth="2" fill="none" />
      <path d="M226 263L281 234 293 238 232 272z" fill="#2c2929" stroke="#050505" />
      <path d="M230 266L288 237" stroke="#544c48" strokeWidth="1.300" />
      <path d="M218 268l10-3 9 4-8 5z" fill="#4c2e18" stroke="#20120a" />
      <path d="M272 231l6-4 5 2v9l-6 4-5-2z" fill="#111" />
      <path d="M285 234l68 28v8L287 241z" fill="#121212" />
      <path d="M285 248L352 278" stroke="#111" strokeWidth="6" /><path d="M290 238l64 27M286 249l66 28" stroke="#55555a" strokeDasharray="5 2" />
      <path d="M323 236h7v21h-7zM306 235h1v18M312 233v17M341 250v15M345 248v18" fill="#14211e" stroke="#222" />
      <path d="M253 274L312 300" stroke="#7d7da0" strokeWidth="1.200" />

      {/* transfer gantry, outfeed side */}
      <path d="M515 375h7v18h-7zM495 374h5v10h-5z" fill="#4d4d50" stroke="#111" />
      <path d="M494 373L541 350 546 355 498 380z" fill="#2a2a2b" stroke="#000" />
      <path d="M498 376l45-22" stroke="#666" strokeWidth=".8" />
      <path d="M541 341l7-4 5 2v27l3 3v8l-16-2z" fill="#151515" />
      <path d="M533 341l4-2 8 3M535 345l8 2M546 342v30M537 372l20 6" stroke="#222" strokeWidth="2" fill="none" />
      <path d="M556 372l5 4v4M544 369l-5 9" stroke="#484848" strokeWidth="1.500" fill="none" />

      {/* press body */}
      <path d="M311 307L402 342V384L311 352z" fill="#4d3435" stroke="#1b0e10" />
      <path d="M315 312v40M342 326v34M350 328v36" stroke="#8a807a" strokeWidth="4" />
      <path d="M318 313v40M333 321v36M373 337v44M382 341v44M390 344v42" stroke="#655b58" strokeWidth="3" />
      <path d="M328 322l30 12v22l-30-11zM368 338l26 11v24l-26-10z" fill="#633431" opacity=".85" />
      <path d="M313 332l88 33M311 341l88 36M337 320v38M378 340v32M346 328v30M386 344v30" stroke="#241518" strokeWidth=".8" />
      {pillars.map(([x, y, h]) => (
        <g key={x}><path d={`M${x} ${y}h7v${h}h-7z`} fill="#78392b" stroke="#2c120c" strokeWidth=".8" /><path d={`M${x - 3} ${y + h}l6 3 7-3`} fill="none" stroke="#3c1a12" strokeWidth="2" /></g>
      ))}
      <path d="M342 370l10-4 5 2-8 5z" fill="#77776c" stroke="#111" />
      <path d="M404 343L446 322V345L421 372 404 370z" fill="#38383a" stroke="#111" />
      <path d="M408 346l28-13v8l-28 13zM410 357l24-11v6l-22 11z" fill="#88877f" stroke="#222" strokeWidth=".7" />
      <path d="M411 348h3M419 344h3M427 340h3M413 358h3M422 354h3" stroke="#222" strokeWidth="2" />
      <path d="M413 364L440 350l13 2-24 18z" fill="#15403f" stroke="#06201f" />
      <path d="M416 364l28-12M424 367l26-14" stroke="#23816f" strokeWidth="1.300" />
      <path d="M427 374L443 363l12 4v5l-15 15z" fill="#7c4f70" stroke="#38202f" />
      <path d="M414 376h6v20h-6zM422 380h5v20h-5zM429 383h6v18h-6z" fill="#77777a" stroke="#222" />
      <path d="M408 366l12 8 14 4v8M413 371v20M438 375l-6 10 8 5" fill="none" stroke="#161616" strokeWidth="2" />
      <path d="M320 303L345 289 385 284 454 312 403 340z" fill="#414347" stroke="#15161a" />
      <path d="M320 303v4L403 345 454 317v-5L403 340z" fill="#55565a" stroke="#15161a" strokeWidth=".7" />
      {clamps.map(([x, y]) => (
        <g key={x}><path d={`M${x - 4} ${y - 5}l6-1 3 4-2 8-4-4-3 2z`} fill="#0d0d0d" /><path d={`M${x - 2} ${y - 2}l4 1M${x} ${y + 2}l3-2`} stroke="#77767a" /></g>
      ))}
      <path d="M310 303l14 2v5l-13-1z" fill="#4c2f1b" stroke="#120c08" />
      {probes.map(([x, y]) => (
        <g key={`${x}-${y}`}><ellipse cx={x} cy={y + 8} rx="4" ry="2.500" fill="#26272b" /><path d={`M${x - 2} ${y}h4v8h-4z`} fill="#5a5b5f" /><ellipse cx={x} cy={y} rx="2" ry="1" fill="#777" /></g>
      ))}
      <path d="M337 277v26M398 312v18M367 297v18M383 302v18" stroke="#101010" strokeWidth="2" />
      <path d="M374 266v-10l3-4 4 4 2 14z" fill="#161616" />
      {cylinders.map(([x, y]) => (
        <g key={x}>
          <path d={`M${x - 1} ${y + 25}v17M${x + 3} ${y + 25}v17M${x + 7} ${y + 22}v17`} stroke="#77787c" strokeWidth="2" />
          <path d={`M${x + 1} ${y + 25}v17M${x + 5} ${y + 24}v17`} stroke="#1a1a1d" />
          <path d={`M${x - 6} ${y + 25}l5 3 12-5v3l-12 5-5-3zM${x - 5} ${y + 41}l6 3 9-4v3l-9 4-6-3z`} fill="#2d2b6e" />
          <path d={`M${x + 3} ${y + 6}l7 3v4l-7 1z`} fill="#37347a" />
          <path d={`M${x - 5} ${y + 1}h7v6l5 2v14l-7 5-5-3z`} fill="#b3b3b4" stroke="#555" strokeWidth=".7" />
          <ellipse cx={x - 2} cy={y} rx="3.500" ry="2" fill="#45403e" />
        </g>
      ))}

      {/* orientation triad */}
      <g strokeWidth="1.500">
        <path d="M160 533v-12" stroke="#1c7d22" /><path d="M157 523l3-6 3 6z" fill="#146b1c" />
        <path d="M160 533l9 4" stroke="#b8261c" /><path d="M167 534l6 4-7 1z" fill="#b8261c" />
        <path d="M160 533l-9 4" stroke="#1924ad" /><path d="M153 534l-6 4 7 1z" fill="#1924ad" />
      </g>
      <g fontSize="5" fontWeight="bold" textAnchor="middle">
        <text x="160" y="516" fill="#1c7d22">Y</text>
        <text x="175" y="540" fill="#d33b2f">X</text>
        <text x="145" y="540" fill="#2d35c2">Z</text>
      </g>
    </svg>
  )
}

const viewTools = ['zoomFit', 'zoomArea', 'prevView', 'section', 'sketchView', 'cubeView']
const viewLabels = ['整屏显示', '局部放大', '上一视图', '剖面视图', '动态注解', '视图定向']
const paneTabs = [
  { icon: 'home', label: '资源' },
  { icon: 'books', label: '设计库', active: true },
  { icon: 'folderOpen', label: '文件探索器' },
  { icon: 'palette', label: '视图调色板' },
  { icon: 'ball', label: '外观' },
  { icon: 'listBlue', label: '自定义属性' },
  { icon: 'robot', label: '插件' },
  { icon: 'cubes', label: '零件库' },
]

function Viewport() {
  return (
    <div className="relative flex-1 min-w-0 bg-linear-to-b from-white via-[#eceef7] to-white border-b-2 border-[#a4a6bd]">
      <Machine />
      <div className="absolute -top-[10px] right-0 w-[141px] flex gap-[6px] overflow-hidden">
        {viewTools.map((tool, i) => (
          <button key={tool} aria-label={viewLabels[i]} className="shrink-0"><Icon name={tool} /></button>
        ))}
      </div>
      <div className="absolute right-0 top-[40px] w-[26px] h-[181px] grid auto-rows-fr">
        {paneTabs.map(({ icon, label, active }) => (
          <button
            key={icon}
            aria-label={label}
            className={`flex items-center justify-center border-b border-l border-[#b4b4b4] ${active ? 'bg-white' : 'bg-[#d8d8d8]'}`}
          >
            <Icon name={icon} />
          </button>
        ))}
      </div>
    </div>
  )
}

function ModelTabs() {
  return (
    <div className="h-[10px] shrink-0 flex items-center bg-[#f7f7f7] pl-[11px] leading-[10px]">
      <div className="w-9 h-2 bg-[#b5b5b5] flex items-center justify-around text-neutral-500">
        <ChevronLeft className="size-[6px]" /><ChevronLeft className="size-[6px]" />
        <ChevronRight className="size-[6px]" /><ChevronRight className="size-[6px]" />
      </div>
      <button className="w-[30px] bg-white">模型</button>
      <button className="w-[31px] bg-[#d4d4d4] border-r border-[#999] whitespace-nowrap">3D 视图</button>
      <button className="w-[47px] bg-[#d4d4d4] border-r border-[#999] whitespace-nowrap">运动算例1</button>
    </div>
  )
}

function FolderIcon() {
  return (
    <svg viewBox="0 0 17 15" className="w-[17px] h-[15px]" aria-hidden="true">
      <defs>
        <linearGradient id="folder" x1="0" y1="0" x2="1" y2="1">
          <stop offset="0" stopColor="#fdfdfd" />
          <stop offset="1" stopColor="#d4d4d4" />
        </linearGradient>
      </defs>
      <path d="M1 14V1.500L2 1h4l1.500 2H16v11z" fill="url(#folder)" stroke="#707070" />
      <path d="M1.500 3.500H7l1-1" fill="none" stroke="#999" strokeWidth=".7" />
    </svg>
  )
}

function DesignLibrary() {
  return (
    <section className="w-[500px] shrink-0 flex flex-col bg-[#f7f7f7] border-b border-[#8d8d8d]">
      <div className="h-[13px] shrink-0 flex items-center justify-between bg-[#aaabad] border-b border-[#8b8b8e] px-[5px]">
        <span className="text-[9px] leading-[9px]">»</span>
        <h2 className="font-bold">设计库</h2>
        <span className="flex items-center gap-[3px]"><Settings className="size-[9px] text-neutral-100" /><Pin className="size-[7px] rotate-90 fill-neutral-800" /></span>
      </div>
      <div className="h-[30px] shrink-0 ml-[2px] pl-1 flex items-center border-b border-[#dedede]">
        <button aria-label="后退" className="size-5 rounded-full border border-neutral-500 bg-white flex items-center justify-center mr-[7px]">
          <svg viewBox="0 0 12 10" className="w-3 h-[10px]"><path d="M0 5l5-5v3h6v4H5v3z" fill="#2f7ea8" /></svg>
        </button>
        <button aria-label="前进" className="size-5 rounded-full border border-neutral-300 flex items-center justify-center">
          <svg viewBox="0 0 12 10" className="w-3 h-[10px]"><path d="M12 5L7 0v3H1v4h6v3z" fill="#ddd" stroke="#bbb" strokeWidth=".6" /></svg>
        </button>
        <button aria-label="历史" className="w-[14px] flex justify-center"><svg viewBox="0 0 4 3" className="w-1 h-[3px]"><path d="M0 0h4L2 3z" fill="#333" /></svg></button>
        <button aria-label="添加到库" className="w-[27px] flex justify-center"><Icon name="booksAdd" /></button>
        <button aria-label="添加文件位置" className="w-[27px] flex justify-center"><Icon name="booksNew" /></button>
        <button aria-label="生成新文件夹" className="w-[26px] flex justify-center"><Icon name="folderNew" className="size-[19px]" /></button>
        <button aria-label="刷新" className="w-[26px] flex justify-center"><Icon name="refresh" /></button>
        <button aria-label="上移" className="w-[27px] flex justify-center"><Icon name="up" /></button>
        <button aria-label="配置 Toolbox" className="w-[26px] flex justify-center"><Icon name="screw" className="size-[19px]" /></button>
      </div>
      <ul className="h-[62px] mt-1 ml-[5px] shrink-0 grid auto-rows-fr">
        {libraryItems.map(({ label, icon, open, selected }) => (
          <li key={label} className="flex items-center">
            <span className="w-3 shrink-0">{open && <ChevronRight className="size-[7px] text-neutral-500" />}</span>
            <span className={`h-full flex items-center gap-[3px] pl-[1px] pr-[2px] ${selected ? 'bg-[#cce4f7]' : ''}`}>
              <Icon name={icon} className="size-[10px]" />{label}
            </span>
          </li>
        ))}
      </ul>
      <div className="flex-1" />
      <div className="h-[3px] shrink-0 ml-[3px] bg-[#a3a5bb]" />
      <div className="h-[231px] shrink-0 pt-1 flex">
        <div className="flex-1 min-w-0 overflow-hidden">
          <ul className="h-[254px] -mt-6 ml-[2px] mr-[22px] grid grid-cols-11 auto-rows-fr">
            {folders.map((name) => (
              <li key={name} className="relative px-[3px] flex flex-col items-center gap-[3px] text-center leading-[10px]">
                <FolderIcon />
                <span>{name}</span>
                {name === '型材铝件' && (
                  <svg viewBox="0 0 8 13" className="absolute left-[22px] top-[12px] w-2 h-[13px]" aria-hidden="true">
                    <path d="M1 1v9l2-2 2 4 1-1-2-3h3z" fill="#fff" stroke="#777" strokeWidth=".8" />
                  </svg>
                )}
              </li>
            ))}
          </ul>
        </div>
        <div className="w-2 flex flex-col items-center">
          <ChevronUp className="size-2" />
          <div className="w-full flex-1 mt-[23px] bg-[#cbcbcb]" />
          <ChevronDown className="size-2" />
        </div>
      </div>
    </section>
  )
}

export default function App() {
  return (
    <div className="h-screen flex flex-col overflow-hidden bg-[#f7f7f7] text-neutral-900 text-[7px] leading-[10px] font-['Noto_Sans','Noto_Sans_CJK_SC',sans-serif]">
      <TitleBar />
      <Ribbon />
      <main className="flex-1 min-h-0 flex border-t border-[#b9b9b9]">
        <div className="flex-1 min-w-0 flex flex-col bg-white">
          <CommandTabs />
          <div className="flex-1 min-h-0 flex">
            <FeatureTree />
            <Viewport />
          </div>
          <ModelTabs />
        </div>
        <DesignLibrary />
      </main>
      <footer className="h-2 shrink-0 flex border-t border-[#c5c5c5] overflow-hidden whitespace-nowrap leading-[10px]">
        <span className="flex-1">OLIDWORKS Premium 2022 SP5.0</span>
        <span className="w-[26px]">欠定义</span>
        <span className="w-[54px]">大型装配体设置</span>
        <span className="w-[107px]">在编辑 装配体</span>
        <span className="w-[30px]">MMGS</span>
        <ChevronUp className="size-[6px] mt-[2px]" />
        <Settings className="size-2 ml-2 mr-[2px]" />
      </footer>
    </div>
  )
}
